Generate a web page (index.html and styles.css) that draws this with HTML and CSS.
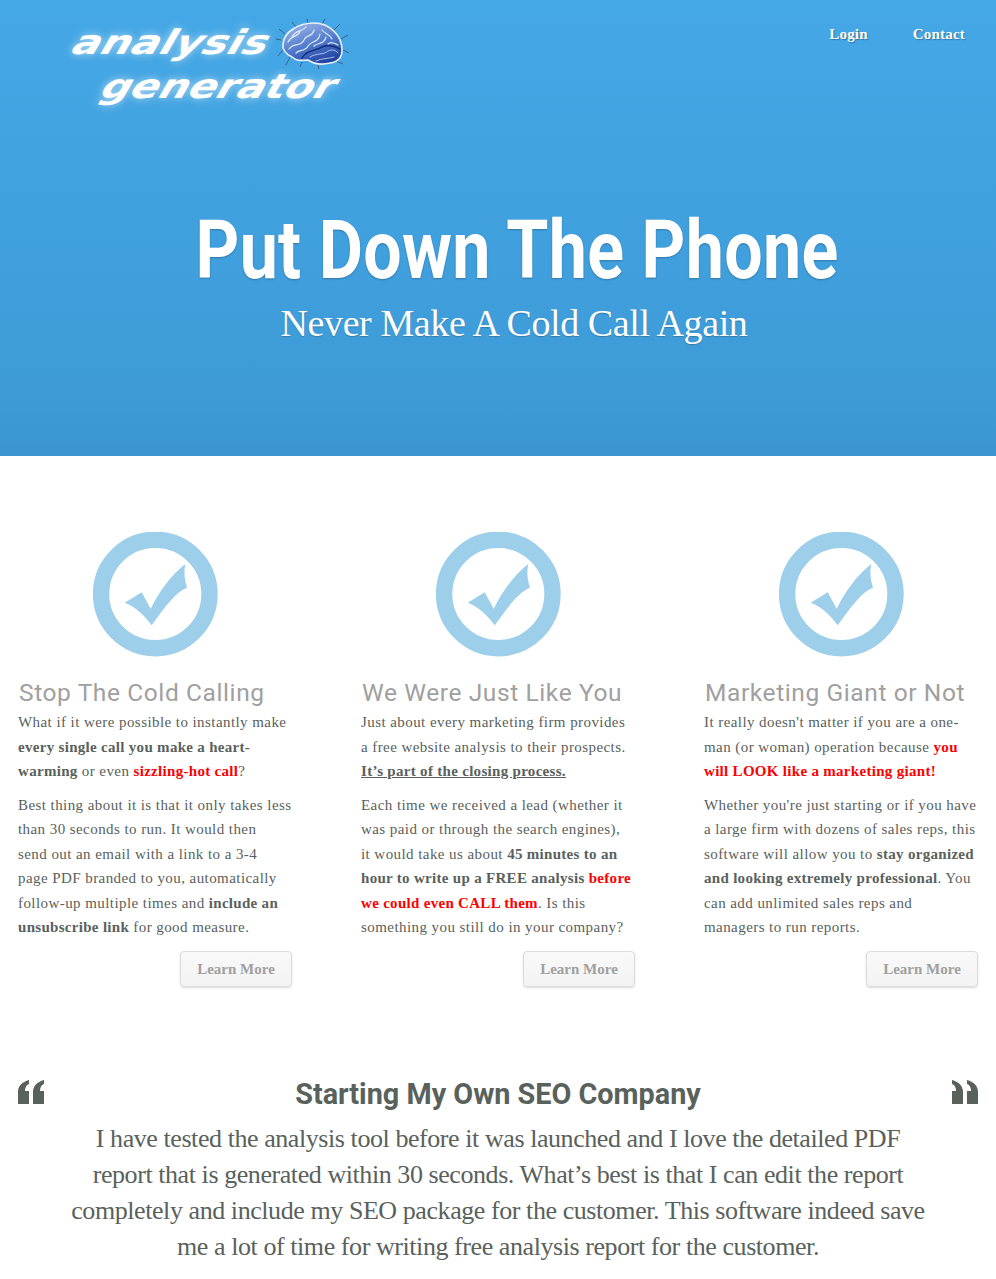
FILE: index.html
```html
<!DOCTYPE html>
<html lang="en">
<head>
  <meta charset="UTF-8">
  <meta name="viewport" content="width=device-width, initial-scale=1.0">
  <title>Analysis Generator | Put Down The Phone</title>
  <link rel="stylesheet" href="styles.css">
</head>
<body>
  <header class="hero">
    <div class="topbar">
      <a class="logo" href="#">
        <span class="logo-top">
          <span class="logo-word">analysis</span>
          <svg class="brain" viewBox="0 0 72 48" width="72" height="48" aria-hidden="true">
            <defs>
              <linearGradient id="brainFill" x1="0.2" y1="0" x2="0.7" y2="1">
                <stop offset="0" stop-color="#9db8e8"/>
                <stop offset="0.55" stop-color="#4f78cc"/>
                <stop offset="1" stop-color="#1f3f9c"/>
              </linearGradient>
            </defs>
            <path d="M7 12 L1 7M3 18 L-2 17M5 28 L0 34M12 35 L8 43M18 5 L14 0M30 1 L29 -3M44 2 L47 -3M56 8 L62 2M63 17 L70 13M65 28 L71 31M58 39 L65 42M40 43 L41 47M24 40 L22 45" stroke="#3f5f84" stroke-width="1" fill="none"/>
            <path d="M5 22 C6 10 20 1 36 1 C52 1 64 14 64 28 C64 36 60 40 52 41 C44 43 36 42 30 38 C24 38 20 40 14 35 C8 32 4 28 5 22 Z" fill="url(#brainFill)" stroke="#e8f0fb" stroke-width="1.6"/>
            <g stroke="#dfe9f8" stroke-width="1.2" fill="none" stroke-linecap="round">
              <path d="M10 20 C14 12 20 16 22 9 M14 15 C17 8 24 10 28 5"/>
              <path d="M11 27 C16 20 22 26 26 18 C28 12 34 16 36 8"/>
              <path d="M18 31 C22 27 27 30 30 24 C33 18 40 22 42 12"/>
              <path d="M36 24 C40 20 46 23 48 15 M44 8 C47 12 52 12 54 17"/>
              <path d="M50 22 C53 19 57 21 60 23"/>
            </g>
            <path d="M24 36 C28 28 38 29 44 25 C50 22 56 24 62 27" stroke="#16307e" stroke-width="1.6" fill="none" stroke-linecap="round"/>
            <g stroke="#a9c0ea" stroke-width="1" fill="none" stroke-linecap="round">
              <path d="M32 35 C38 31 46 33 50 29 C54 27 58 28 60 31"/>
              <path d="M38 39 C44 36 50 37 56 35"/>
            </g>
          </svg>
        </span>
        <span class="logo-word logo-bottom">generator</span>
      </a>
      <nav class="nav">
        <a href="#">Login</a>
        <a href="#">Contact</a>
      </nav>
    </div>
    <h1>Put Down The Phone</h1>
    <p class="tagline">Never Make A Cold Call Again</p>
  </header>

  <main class="content">
    <section class="features">
      <article class="feature">
        <svg class="check" viewBox="0 0 125 125" width="125" height="125" aria-hidden="true">
          <circle cx="62.3" cy="62" r="54.2" fill="none" stroke="#9dcfeb" stroke-width="16.4"/>
          <path d="M31.7 70.7 L48.7 60.3 L57.7 76.7 C66 60 78 43 92.3 32 C90.5 40 91.5 48 94 55.7 C82 60 70 78 58.7 93.3 C52 84 43 75 31.7 70.7 Z" fill="#9dcfeb"/>
        </svg>
        <h2>Stop The Cold Calling</h2>
        <p>What if it were possible to instantly make <b>every single call you make a heart-warming</b> or even <b class="hot">sizzling-hot call</b>?</p>
        <p>Best thing about it is that it only takes less than 30 seconds to run. It would then<br>send out an email with a link to a 3-4<br>page PDF branded to you, automatically<br>follow-up multiple times and <b>include an unsubscribe link</b> for good measure.</p>
        <a class="btn" href="#">Learn More</a>
      </article>
      <article class="feature">
        <svg class="check" viewBox="0 0 125 125" width="125" height="125" aria-hidden="true">
          <circle cx="62.3" cy="62" r="54.2" fill="none" stroke="#9dcfeb" stroke-width="16.4"/>
          <path d="M31.7 70.7 L48.7 60.3 L57.7 76.7 C66 60 78 43 92.3 32 C90.5 40 91.5 48 94 55.7 C82 60 70 78 58.7 93.3 C52 84 43 75 31.7 70.7 Z" fill="#9dcfeb"/>
        </svg>
        <h2>We Were Just Like You</h2>
        <p>Just about every marketing firm provides a free website analysis to their prospects. <b class="under">It’s part of the closing process.</b></p>
        <p>Each time we received a lead (whether it was paid or through the search engines),<br>it would take us about <b>45 minutes to an hour to write up a FREE analysis</b> <b class="hot">before we could even CALL them</b>. Is this something you still do in your company?</p>
        <a class="btn" href="#">Learn More</a>
      </article>
      <article class="feature">
        <svg class="check" viewBox="0 0 125 125" width="125" height="125" aria-hidden="true">
          <circle cx="62.3" cy="62" r="54.2" fill="none" stroke="#9dcfeb" stroke-width="16.4"/>
          <path d="M31.7 70.7 L48.7 60.3 L57.7 76.7 C66 60 78 43 92.3 32 C90.5 40 91.5 48 94 55.7 C82 60 70 78 58.7 93.3 C52 84 43 75 31.7 70.7 Z" fill="#9dcfeb"/>
        </svg>
        <h2>Marketing Giant or Not</h2>
        <p>It really doesn't matter if you are a one-man (or woman) operation because <b class="hot">you will LOOK like a marketing giant!</b></p>
        <p>Whether you're just starting or if you have a large firm with dozens of sales reps, this software will allow you to <b>stay organized and looking extremely professional</b>. You can add unlimited sales reps and<br>managers to run reports.</p>
        <a class="btn" href="#">Learn More</a>
      </article>
    </section>

    <section class="testimonial">
      <svg class="quote-mark" viewBox="0 0 26 24" width="26" height="24" aria-hidden="true">
        <path d="M0 24 V12 C0 6 4 2 11 0 V4 C8 5 7 8 7 11 H11 V24 Z M15 24 V12 C15 6 19 2 26 0 V4 C23 5 22 8 22 11 H26 V24 Z" fill="#59615c"/>
      </svg>
      <div class="quote-body">
        <h3>Starting My Own SEO Company</h3>
        <p>I have tested the analysis tool before it was launched and I love the detailed PDF report that is generated within 30 seconds. What’s best is that I can edit the report completely and include my SEO package for the customer. This software indeed save me a lot of time for writing free analysis report for the customer.</p>
      </div>
      <svg class="quote-mark quote-close" viewBox="0 0 26 24" width="26" height="24" aria-hidden="true">
        <path d="M0 24 V12 C0 6 4 2 11 0 V4 C8 5 7 8 7 11 H11 V24 Z M15 24 V12 C15 6 19 2 26 0 V4 C23 5 22 8 22 11 H26 V24 Z" fill="#59615c"/>
      </svg>
    </section>
  </main>
</body>
</html>
```

FILE: styles.css
```css
body { margin: 0; padding: 0; background: #fff; color: #59615c; font-family: "Liberation Serif", serif; }

.hero { height: 456px; box-sizing: border-box; background: linear-gradient(to bottom, #45a8e6 0%, #3d9ad7 90%, #3a94d0 100%); color: #fff; text-align: center; overflow: hidden; }
.topbar { display: flex; justify-content: space-between; align-items: flex-start; height: 210px; padding: 0 31px 0 0; }
.logo { display: block; margin: 18px 0 0 66px; width: 290px; color: #fff; text-decoration: none; text-align: left; }
.logo-top { display: flex; align-items: flex-start; height: 50px; }
.logo-word { display: block; font-family: "DejaVu Sans", sans-serif; font-weight: 700; font-size: 34px; line-height: 40px; transform-origin: left center; text-shadow: 0 0 7px rgba(255,255,255,.6); }
.logo-top .logo-word { margin: 4px 0 0 9px; width: 203px; transform: skewX(-30deg) scaleX(1.25); }
.brain { display: block; margin-top: 4px; overflow: visible; }
.logo-bottom { margin: -2px 0 0 38px; transform: skewX(-30deg) scaleX(1.22); }
.nav { display: flex; gap: 45px; padding-top: 25px; }
.nav a { color: #fff; text-decoration: none; font-weight: 700; font-size: 15px; line-height: 18px; letter-spacing: .2px; text-shadow: 1px 1px 1px rgba(0,0,0,.3); }

h1 { margin: 0 0 0 38px; font-family: Roboto, sans-serif; font-weight: 700; font-size: 82px; line-height: 80px; letter-spacing: .4px; transform: scaleX(.83); text-shadow: 0 1px 2px rgba(0,0,0,.25); white-space: nowrap; }
.tagline { margin: 10px 0 0; font-size: 38px; line-height: 46px; letter-spacing: -.4px; padding-left: 32px; text-shadow: 0 1px 1px rgba(0,0,0,.2); }

.content { padding: 76px 18px 0; }
.features { display: grid; grid-template-columns: repeat(3, 274px); column-gap: 69px; }
.feature { display: flex; flex-direction: column; }
.check { display: block; margin: 0 0 20px 75px; }
.feature h2 { margin: 0 0 1px; padding-left: 1px; font-family: Roboto, sans-serif; font-weight: 400; font-size: 24.5px; line-height: 32px; letter-spacing: .6px; color: #a0a0a0; white-space: nowrap; }
.feature p { margin: 0 0 9px; font-size: 15px; line-height: 24.5px; letter-spacing: .43px; }
.feature b { font-weight: 700; letter-spacing: .3px; }
.hot { color: #f00; }
.under { text-decoration: underline; }
.btn { align-self: flex-end; margin-top: 2px; box-sizing: border-box; width: 112px; height: 36px; border: 1px solid #dcdcdc; border-radius: 4px; background: linear-gradient(to bottom, #f9f9f9, #f3f3f3); box-shadow: 0 1px 2px rgba(0,0,0,.15); color: #a0a0a0; font-weight: 700; font-size: 15px; line-height: 34px; text-align: center; text-decoration: none; }

.testimonial { display: flex; align-items: flex-start; justify-content: space-between; margin-top: 90px; }
.quote-mark { display: block; flex: none; margin-top: 3px; }
.quote-close { transform: scaleX(-1); }
.quote-body { width: 862px; margin-top: -1px; text-align: center; }
.quote-body h3 { margin: 0; font-family: Roboto, sans-serif; font-weight: 700; font-size: 28.8px; line-height: 36px; color: #59615c; }
.quote-body p { margin: 9px 0 0; font-size: 26px; line-height: 36px; letter-spacing: -.43px; }
```
